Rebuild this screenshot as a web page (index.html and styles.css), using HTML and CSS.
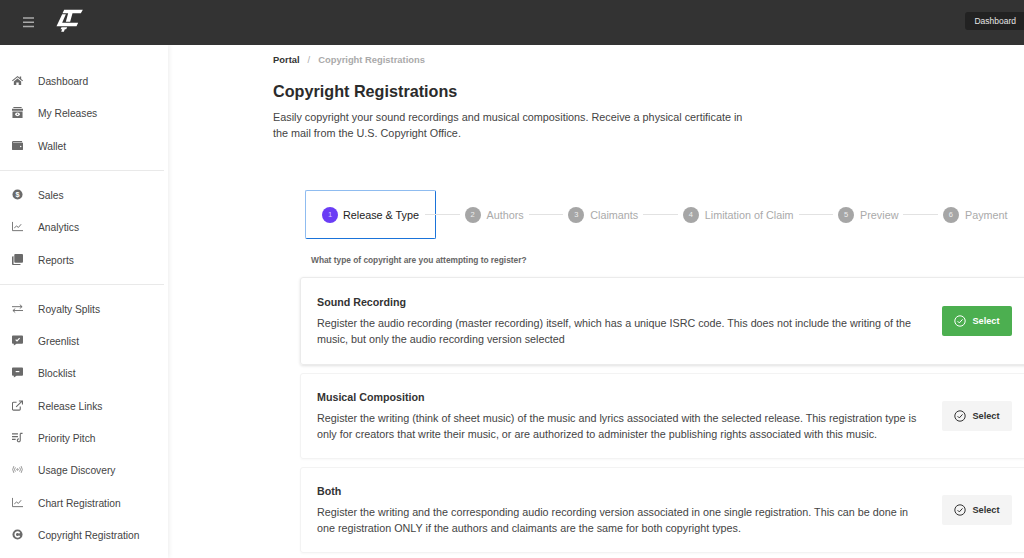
FILE: index.html
```html
<!DOCTYPE html>
<html lang="en">
<head>
<meta charset="utf-8">
<title>Copyright Registrations</title>
<link rel="stylesheet" href="styles.css">
</head>
<body>
<header class="topbar">
  <svg class="burger" viewBox="0 0 12 11"><path d="M0 1h11M0 5.300h11M0 9.600h11"/></svg>
  <svg class="logo" viewBox="18 15 80 72"><path d="M42 17h56l-6 11H67l-7 25h-13l7-25H37z"/><path d="M36 31h11L36 56h48l-5 11H19z"/><path d="M34 70h17l-3 6h-4l-3 7H33l3-7h-5z"/></svg>
  <span class="top-pill">Dashboard</span>
</header>
<div class="layout">
  <nav class="sidebar">
    <a class="nav-item"><svg class="ico" viewBox="0 0 12 10"><path d="M6 0 0 5l.7.800L6 1.500l5.300 4.300.7-.8-2-1.700V.7H8.500v1.400zM2 6.200 6 2.800l4 3.400V10H7.300V7.300H4.700V10H2z"/></svg><span>Dashboard</span></a>
    <a class="nav-item"><svg class="ico" viewBox="0 0 12 12"><path d="M1.500 0h9v1.200h-9zM0 2h12v2H0zM.5 4.800h11V12H.5z"/><ellipse cx="6" cy="8" rx="2.600" ry="2" fill="#fff"/><circle cx="6" cy="8" r=".8"/></svg><span>My Releases</span></a>
    <a class="nav-item"><svg class="ico" viewBox="0 0 12 10"><path d="M1.500 0H11v1.500H1.200V2H12v7a1 1 0 0 1-1 1H1a1 1 0 0 1-1-1V1.500A1.500 1.500 0 0 1 1.500 0z"/><circle cx="9.500" cy="6" r=".8" fill="#fff"/></svg><span>Wallet</span></a>
    <hr class="nav-rule">
    <a class="nav-item"><svg class="ico" viewBox="0 0 12 12"><circle cx="6" cy="6" r="5.500"/><text class="ico-letter" x="6" y="8.600">$</text></svg><span>Sales</span></a>
    <a class="nav-item"><svg class="ico line" viewBox="0 0 12 10"><path d="M.5 0v9.500H12M2.500 6.500l2.500-2 2 1.500 3-3.500"/></svg><span>Analytics</span></a>
    <a class="nav-item"><svg class="ico" viewBox="0 0 12 12"><path d="M3.500 0H11a1 1 0 0 1 1 1v7.500a1 1 0 0 1-1 1H3.500a1 1 0 0 1-1-1V1a1 1 0 0 1 1-1z"/><path d="M0 3.500a1 1 0 0 1 1-1h.7v8.300H9.500v.2a1 1 0 0 1-1 1H1a1 1 0 0 1-1-1z"/></svg><span>Reports</span></a>
    <hr class="nav-rule">
    <a class="nav-item"><svg class="ico line" viewBox="0 0 12 10"><path d="M0 3h11M8.500.8 11 3 8.500 5M12 7.200H1M3.500 5.200 1 7.200l2.500 2.200"/></svg><span>Royalty Splits</span></a>
    <a class="nav-item"><svg class="ico" viewBox="0 0 12 11"><path d="M1 0h10a1 1 0 0 1 1 1v7a1 1 0 0 1-1 1H5l-3 2V9H1a1 1 0 0 1-1-1V1a1 1 0 0 1 1-1z"/><path class="ico-cut" d="M4 4.500l1.500 1.500L8.300 3"/></svg><span>Greenlist</span></a>
    <a class="nav-item"><svg class="ico" viewBox="0 0 12 11"><path d="M1 0h10a1 1 0 0 1 1 1v7a1 1 0 0 1-1 1H5l-3 2V9H1a1 1 0 0 1-1-1V1a1 1 0 0 1 1-1z"/><path class="ico-cut" d="M4 4.500h4"/></svg><span>Blocklist</span></a>
    <a class="nav-item"><svg class="ico line heavy" viewBox="0 0 12 11"><path d="M5 2H1.500a1 1 0 0 0-1 1v6.500a1 1 0 0 0 1 1H8a1 1 0 0 0 1-1V6.500M4.500 7 11 .8M7.500.6h3.900v3.900"/></svg><span>Release Links</span></a>
    <a class="nav-item"><svg class="ico line heavy" viewBox="0 0 12 11"><path d="M0 1.500h6.500M0 4.500h6.500M0 7.500h4M9 1v7.500a1.600 1.600 0 1 1-1.500-1.500M9 1h2.500"/></svg><span>Priority Pitch</span></a>
    <a class="nav-item"><svg class="ico line thin" viewBox="0 0 13 9"><circle cx="6.500" cy="4.500" r=".9"/><path d="M4 2a4 4 0 0 0 0 5M9 2a4 4 0 0 1 0 5M2.200.5a7 7 0 0 0 0 8M10.800.5a7 7 0 0 1 0 8"/></svg><span>Usage Discovery</span></a>
    <a class="nav-item"><svg class="ico line" viewBox="0 0 12 10"><path d="M.5 0v9.500H12M2.500 6.500l2.500-2 2 1.500 3-3.500"/></svg><span>Chart Registration</span></a>
    <a class="nav-item"><svg class="ico" viewBox="0 0 12 12"><circle cx="6" cy="6" r="5.500"/><path class="ico-cut wide" d="M8.300 4.600a2.600 2.600 0 1 0 0 2.800"/></svg><span>Copyright Registration</span></a>
  </nav>
  <main class="main">
    <p class="crumbs"><b>Portal</b><i>/</i><span>Copyright Registrations</span></p>
    <h1>Copyright Registrations</h1>
    <p class="lead">Easily copyright your sound recordings and musical compositions. Receive a physical certificate in the mail from the U.S. Copyright Office.</p>
    <div class="stepper">
      <div class="step current"><em>1</em>Release &amp; Type</div>
      <div class="link l1"></div>
      <div class="step"><em>2</em>Authors</div>
      <div class="link"></div>
      <div class="step"><em>3</em>Claimants</div>
      <div class="link"></div>
      <div class="step"><em>4</em>Limitation of Claim</div>
      <div class="link"></div>
      <div class="step"><em>5</em>Preview</div>
      <div class="link"></div>
      <div class="step"><em>6</em>Payment</div>
    </div>
    <p class="question">What type of copyright are you attempting to register?</p>
    <section class="card first">
      <div class="copy">
        <h2>Sound Recording</h2>
        <p>Register the audio recording (master recording) itself, which has a unique ISRC code. This does not include the writing of the music, but only the audio recording version selected</p>
      </div>
      <button class="pick on"><svg viewBox="0 0 12 12"><circle cx="6" cy="6" r="5.200"/><path d="M3.600 6.200l1.700 1.700 3.200-3.500"/></svg>Select</button>
    </section>
    <section class="card">
      <div class="copy">
        <h2>Musical Composition</h2>
        <p>Register the writing (think of sheet music) of the music and lyrics associated with the selected release. This registration type is only for creators that write their music, or are authorized to administer the publishing rights associated with this music.</p>
      </div>
      <button class="pick"><svg viewBox="0 0 12 12"><circle cx="6" cy="6" r="5.200"/><path d="M3.600 6.200l1.700 1.700 3.200-3.500"/></svg>Select</button>
    </section>
    <section class="card">
      <div class="copy">
        <h2>Both</h2>
        <p>Register the writing and the corresponding audio recording version associated in one single registration. This can be done in one registration ONLY if the authors and claimants are the same for both copyright types.</p>
      </div>
      <button class="pick"><svg viewBox="0 0 12 12"><circle cx="6" cy="6" r="5.200"/><path d="M3.600 6.200l1.700 1.700 3.200-3.500"/></svg>Select</button>
    </section>
  </main>
</div>
</body>
</html>
```

FILE: styles.css
```css
* { box-sizing: border-box; }
html, body { margin: 0; height: 558px; overflow: hidden; }
body { font-family: "Liberation Sans", Arial, sans-serif; color: #333; background: #fff; }

.topbar { height: 45px; background: #333; display: flex; align-items: center; padding-left: 23px; position: relative; }
.burger { width: 12px; height: 11px; fill: none; stroke: #aaa; stroke-width: 1.500; }
.logo { width: 27px; height: 24px; margin-left: 21px; margin-top: -3px; fill: #fff; }
.top-pill { position: absolute; right: 0; top: 12px; height: 18px; padding: 0 8px 0 9px; background: #222; border-radius: 3px 0 0 3px; color: #e6e6e6; font-size: 8.500px; line-height: 18px; }

.layout { display: flex; height: 513px; }
.sidebar { width: 168px; flex: none; padding: 20.400px 0 0; box-shadow: 1px 0 5px rgba(0,0,0,.08); display: flex; flex-direction: column; }
.nav-item { height: 32.300px; flex: none; display: flex; align-items: center; padding-left: 12px; font-size: 10.250px; color: #444; }
.nav-item span { margin-left: 15px; }
.ico { width: 11px; height: 11px; flex: none; fill: #6a6a6a; margin-top: -2px; }
.ico.line { fill: none; stroke: #6a6a6a; stroke-width: 1; }
.ico.line.heavy { stroke-width: 1.200; }
.ico.thin { stroke-width: .8; }
.ico-letter { fill: #fff; font-size: 8px; font-weight: 700; text-anchor: middle; font-family: "Liberation Sans", sans-serif; }
.ico-cut { fill: none; stroke: #fff; stroke-width: 1.300; }
.ico-cut.wide { stroke-width: 1.700; }
.nav-rule { flex: none; width: 164px; margin: 8px 0; border: 0; border-top: 1px solid #e9e9e9; }

.main { flex: 1; min-width: 0; padding: 9px 0 0 105px; }
.crumbs { margin: 0; font-size: 9.400px; line-height: 12px; color: #aaa; font-weight: 700; }
.crumbs b { color: #333; }
.crumbs i { font-style: normal; font-weight: 400; margin: 0 8px; }
h1 { margin: 15px 0 0; font-size: 16.200px; line-height: 20px; font-weight: 700; color: #2b2b2b; }
.lead { margin: 8px 0 0; width: 480px; font-size: 10.820px; line-height: 16px; color: #444; }

.stepper { display: flex; align-items: center; margin: 49px 0 0 32px; height: 49px; white-space: nowrap; }
.step { display: flex; align-items: center; font-size: 10.800px; color: #aaa; flex: none; }
.step em { width: 16px; height: 16px; border-radius: 50%; background: #a6a6a6; color: #eee; font-style: normal; font-size: 7.500px; line-height: 16px; text-align: center; margin-right: 6px; }
.step.current { height: 49px; width: 131px; padding-left: 16px; border: 1px solid #1a73d9; border-left-color: #8fbcf0; border-top-color: #8fbcf0; border-radius: 2px; color: #222; }
.step.current em { background: #6a3df5; color: #d8ccff; margin-right: 5px; }
.link { height: 1px; width: 34.500px; background: #e2e2e2; margin: 0 5px; flex: none; }
.link.l1 { margin-left: -11px; }

.question { margin: 15px 0 0 38px; font-size: 8.350px; line-height: 12px; font-weight: 700; color: #666; }
.card { margin: 8px 0 0 27px; width: 740px; height: 86px; display: flex; align-items: center; padding: 0 27px 0 16px; border: 1px solid #f3f3f3; border-radius: 3px; box-shadow: 0 1px 2px rgba(0,0,0,.03); }
.card.first { height: 88px; margin-top: 11px; border-color: #ebebeb; box-shadow: 0 1px 3px rgba(0,0,0,.12); }
.copy { flex: 1; min-width: 0; }
h2 { margin: 0 0 6.500px; font-size: 10.700px; line-height: 14px; font-weight: 700; color: #333; }
.copy p { margin: 0; font-size: 10.780px; line-height: 16px; color: #444; width: 605px; }
.pick { flex: none; width: 70px; height: 30px; border: 0; border-radius: 2px; background: #f4f4f4; color: #333; font: 700 9.200px "Liberation Sans", Arial, sans-serif; display: flex; align-items: center; justify-content: center; gap: 6px; }
.pick svg { width: 12px; height: 12px; fill: none; stroke: currentColor; stroke-width: 1; }
.pick.on { background: #4caf50; color: #fff; }
```
